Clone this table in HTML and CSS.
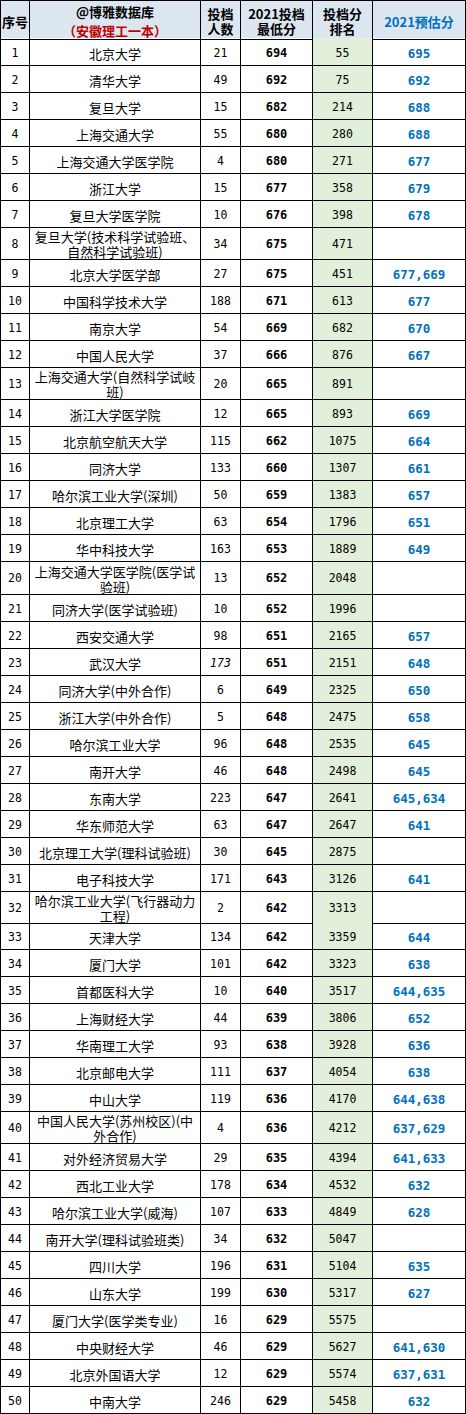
FILE: index.html
```html
<!DOCTYPE html>
<html lang="zh-CN">
<head>
<meta charset="utf-8">
<title>2021投档</title>
<link rel="stylesheet" href="styles.css">
</head>
<body>
<div class="sheet">
  <div class="row head">
    <div class="c hc">序号</div>
    <div class="c hc title"><span class="t1">@博雅数据库</span><span class="t2">（安徽理工一本）</span></div>
    <div class="c hc two">投档<br>人数</div>
    <div class="c hc two">2021投档<br>最低分</div>
    <div class="c hc two rank">投档分<br>排名</div>
    <div class="c hc blue">2021预估分</div>
  </div>
  <div class="row first"><div class="c no">1</div><div class="c name">北京大学</div><div class="c n">21</div><div class="c b">694</div><div class="c n rank">55</div><div class="c est">695</div></div>
  <div class="row"><div class="c no">2</div><div class="c name">清华大学</div><div class="c n">49</div><div class="c b">692</div><div class="c n rank">75</div><div class="c est">692</div></div>
  <div class="row"><div class="c no">3</div><div class="c name">复旦大学</div><div class="c n">15</div><div class="c b">682</div><div class="c n rank">214</div><div class="c est">688</div></div>
  <div class="row"><div class="c no">4</div><div class="c name">上海交通大学</div><div class="c n">55</div><div class="c b">680</div><div class="c n rank">280</div><div class="c est">688</div></div>
  <div class="row"><div class="c no">5</div><div class="c name">上海交通大学医学院</div><div class="c n">4</div><div class="c b">680</div><div class="c n rank">271</div><div class="c est">677</div></div>
  <div class="row"><div class="c no">6</div><div class="c name">浙江大学</div><div class="c n">15</div><div class="c b">677</div><div class="c n rank">358</div><div class="c est">679</div></div>
  <div class="row"><div class="c no">7</div><div class="c name">复旦大学医学院</div><div class="c n">10</div><div class="c b">676</div><div class="c n rank">398</div><div class="c est">678</div></div>
  <div class="row h32"><div class="c no">8</div><div class="c name"><span class="ln">复旦大学(技术科学试验班、</span><span class="ln">自然科学试验班)</span></div><div class="c n">34</div><div class="c b">675</div><div class="c n rank">471</div><div class="c est"></div></div>
  <div class="row"><div class="c no">9</div><div class="c name">北京大学医学部</div><div class="c n">27</div><div class="c b">675</div><div class="c n rank">451</div><div class="c est">677,669</div></div>
  <div class="row"><div class="c no">10</div><div class="c name">中国科学技术大学</div><div class="c n">188</div><div class="c b">671</div><div class="c n rank">613</div><div class="c est">677</div></div>
  <div class="row"><div class="c no">11</div><div class="c name">南京大学</div><div class="c n">54</div><div class="c b">669</div><div class="c n rank">682</div><div class="c est">670</div></div>
  <div class="row"><div class="c no">12</div><div class="c name">中国人民大学</div><div class="c n">37</div><div class="c b">666</div><div class="c n rank">876</div><div class="c est">667</div></div>
  <div class="row h32"><div class="c no">13</div><div class="c name"><span class="ln">上海交通大学(自然科学试岐</span><span class="ln">班)</span></div><div class="c n">20</div><div class="c b">665</div><div class="c n rank">891</div><div class="c est"></div></div>
  <div class="row"><div class="c no">14</div><div class="c name">浙江大学医学院</div><div class="c n">12</div><div class="c b">665</div><div class="c n rank">893</div><div class="c est">669</div></div>
  <div class="row"><div class="c no">15</div><div class="c name">北京航空航天大学</div><div class="c n">115</div><div class="c b">662</div><div class="c n rank">1075</div><div class="c est">664</div></div>
  <div class="row"><div class="c no">16</div><div class="c name">同济大学</div><div class="c n">133</div><div class="c b">660</div><div class="c n rank">1307</div><div class="c est">661</div></div>
  <div class="row"><div class="c no">17</div><div class="c name">哈尔滨工业大学(深圳)</div><div class="c n">50</div><div class="c b">659</div><div class="c n rank">1383</div><div class="c est">657</div></div>
  <div class="row"><div class="c no">18</div><div class="c name">北京理工大学</div><div class="c n">63</div><div class="c b">654</div><div class="c n rank">1796</div><div class="c est">651</div></div>
  <div class="row"><div class="c no">19</div><div class="c name">华中科技大学</div><div class="c n">163</div><div class="c b">653</div><div class="c n rank">1889</div><div class="c est">649</div></div>
  <div class="row h33"><div class="c no">20</div><div class="c name"><span class="ln">上海交通大学医学院(医学试</span><span class="ln">验班)</span></div><div class="c n">13</div><div class="c b">652</div><div class="c n rank">2048</div><div class="c est"></div></div>
  <div class="row"><div class="c no">21</div><div class="c name">同济大学(医学试验班)</div><div class="c n">10</div><div class="c b">652</div><div class="c n rank">1996</div><div class="c est"></div></div>
  <div class="row"><div class="c no">22</div><div class="c name">西安交通大学</div><div class="c n">98</div><div class="c b">651</div><div class="c n rank">2165</div><div class="c est">657</div></div>
  <div class="row"><div class="c no">23</div><div class="c name">武汉大学</div><div class="c n"><i>173</i></div><div class="c b">651</div><div class="c n rank">2151</div><div class="c est">648</div></div>
  <div class="row"><div class="c no">24</div><div class="c name">同济大学(中外合作)</div><div class="c n">6</div><div class="c b">649</div><div class="c n rank">2325</div><div class="c est">650</div></div>
  <div class="row"><div class="c no">25</div><div class="c name">浙江大学(中外合作)</div><div class="c n">5</div><div class="c b">648</div><div class="c n rank">2475</div><div class="c est">658</div></div>
  <div class="row"><div class="c no">26</div><div class="c name">哈尔滨工业大学</div><div class="c n">96</div><div class="c b">648</div><div class="c n rank">2535</div><div class="c est">645</div></div>
  <div class="row"><div class="c no">27</div><div class="c name">南开大学</div><div class="c n">46</div><div class="c b">648</div><div class="c n rank">2498</div><div class="c est">645</div></div>
  <div class="row"><div class="c no">28</div><div class="c name">东南大学</div><div class="c n">223</div><div class="c b">647</div><div class="c n rank">2641</div><div class="c est">645,634</div></div>
  <div class="row"><div class="c no">29</div><div class="c name">华东师范大学</div><div class="c n">63</div><div class="c b">647</div><div class="c n rank">2647</div><div class="c est">641</div></div>
  <div class="row"><div class="c no">30</div><div class="c name">北京理工大学(理科试验班)</div><div class="c n">30</div><div class="c b">645</div><div class="c n rank">2875</div><div class="c est"></div></div>
  <div class="row"><div class="c no">31</div><div class="c name">电子科技大学</div><div class="c n">171</div><div class="c b">643</div><div class="c n rank">3126</div><div class="c est">641</div></div>
  <div class="row h31"><div class="c no">32</div><div class="c name"><span class="ln">哈尔滨工业大学(飞行器动力</span><span class="ln">工程)</span></div><div class="c n">2</div><div class="c b">642</div><div class="c n rank">3313</div><div class="c est"></div></div>
  <div class="row"><div class="c no">33</div><div class="c name">天津大学</div><div class="c n">134</div><div class="c b">642</div><div class="c n rank">3359</div><div class="c est">644</div></div>
  <div class="row"><div class="c no">34</div><div class="c name">厦门大学</div><div class="c n">101</div><div class="c b">642</div><div class="c n rank">3323</div><div class="c est">638</div></div>
  <div class="row"><div class="c no">35</div><div class="c name">首都医科大学</div><div class="c n">10</div><div class="c b">640</div><div class="c n rank">3517</div><div class="c est">644,635</div></div>
  <div class="row"><div class="c no">36</div><div class="c name">上海财经大学</div><div class="c n">44</div><div class="c b">639</div><div class="c n rank">3806</div><div class="c est">652</div></div>
  <div class="row"><div class="c no">37</div><div class="c name">华南理工大学</div><div class="c n">93</div><div class="c b">638</div><div class="c n rank">3928</div><div class="c est">636</div></div>
  <div class="row"><div class="c no">38</div><div class="c name">北京邮电大学</div><div class="c n">111</div><div class="c b">637</div><div class="c n rank">4054</div><div class="c est">638</div></div>
  <div class="row"><div class="c no">39</div><div class="c name">中山大学</div><div class="c n">119</div><div class="c b">636</div><div class="c n rank">4170</div><div class="c est">644,638</div></div>
  <div class="row h32"><div class="c no">40</div><div class="c name"><span class="ln">中国人民大学(苏州校区)(中</span><span class="ln">外合作)</span></div><div class="c n">4</div><div class="c b">636</div><div class="c n rank">4212</div><div class="c est">637,629</div></div>
  <div class="row"><div class="c no">41</div><div class="c name">对外经济贸易大学</div><div class="c n">29</div><div class="c b">635</div><div class="c n rank">4394</div><div class="c est">641,633</div></div>
  <div class="row"><div class="c no">42</div><div class="c name">西北工业大学</div><div class="c n">178</div><div class="c b">634</div><div class="c n rank">4532</div><div class="c est">632</div></div>
  <div class="row"><div class="c no">43</div><div class="c name">哈尔滨工业大学(威海)</div><div class="c n">107</div><div class="c b">633</div><div class="c n rank">4849</div><div class="c est">628</div></div>
  <div class="row"><div class="c no">44</div><div class="c name">南开大学(理科试验班类)</div><div class="c n">34</div><div class="c b">632</div><div class="c n rank">5047</div><div class="c est"></div></div>
  <div class="row"><div class="c no">45</div><div class="c name">四川大学</div><div class="c n">196</div><div class="c b">631</div><div class="c n rank">5104</div><div class="c est">635</div></div>
  <div class="row"><div class="c no">46</div><div class="c name">山东大学</div><div class="c n">199</div><div class="c b">630</div><div class="c n rank">5317</div><div class="c est">627</div></div>
  <div class="row"><div class="c no">47</div><div class="c name">厦门大学(医学类专业)</div><div class="c n">16</div><div class="c b">629</div><div class="c n rank">5575</div><div class="c est"></div></div>
  <div class="row"><div class="c no">48</div><div class="c name">中央财经大学</div><div class="c n">46</div><div class="c b">629</div><div class="c n rank">5627</div><div class="c est">641,630</div></div>
  <div class="row"><div class="c no">49</div><div class="c name">北京外国语大学</div><div class="c n">12</div><div class="c b">629</div><div class="c n rank">5574</div><div class="c est">637,631</div></div>
  <div class="row"><div class="c no">50</div><div class="c name">中南大学</div><div class="c n">246</div><div class="c b">629</div><div class="c n rank">5458</div><div class="c est">632</div></div>
</div>
</body>
</html>
```
FILE: styles.css
```css
html, body {
  margin: 0;
  padding: 0;
  background: #ffffff;
}

.sheet {
  display: flex;
  flex-direction: column;
  width: 466px;
  box-sizing: border-box;
  border-left: 1px solid #000;
  border-top: 1px solid #000;
  font-family: "Noto Sans CJK SC", sans-serif;
  font-size: 13px;
  color: #000;
}

.row {
  display: grid;
  grid-template-columns: 29px 171px 40px 72px 60px 93px;
  height: 27px;
}

.row.head { height: 37px; background: #dce6f1; }
.row.first { height: 28px; }
.row.h31 { height: 31px; }
.row.h32 { height: 32px; }
.row.h33 { height: 33px; }

.c {
  box-sizing: border-box;
  border-right: 1px solid #000;
  border-bottom: 1px solid #000;
  display: flex;
  align-items: center;
  justify-content: center;
  text-align: center;
  padding-top: 3px;
  line-height: 15px;
  white-space: nowrap;
}

.row.h31 .c, .row.h32 .c, .row.h33 .c { padding-top: 1px; }

.name { font-size: 13px; }

.name .ln {
  display: block;
  height: 15px;
  line-height: 15px;
}

.row.h31 .name, .row.h32 .name, .row.h33 .name {
  flex-direction: column;
}

.hc {
  font-weight: bold;
  padding-top: 2px;
  line-height: 15px;
}

.hc.title {
  flex-direction: column;
  justify-content: flex-start;
  gap: 3px;
  padding-top: 3px;
  line-height: 16px;
}

.t2 { color: #c00000; }

.hc.blue { color: #0070c0; }

.rank { background: #e2efda; }
.head .rank { background: #dce6f1; }

.no, .n {
  font-family: "DejaVu Sans Mono", monospace;
  font-size: 11.5px;
}

.b {
  font-family: "DejaVu Sans Mono", monospace;
  font-size: 12px;
  font-weight: bold;
}

.est {
  font-family: "DejaVu Sans Mono", monospace;
  font-size: 12.5px;
  font-weight: bold;
  color: #0070c0;
}
```
